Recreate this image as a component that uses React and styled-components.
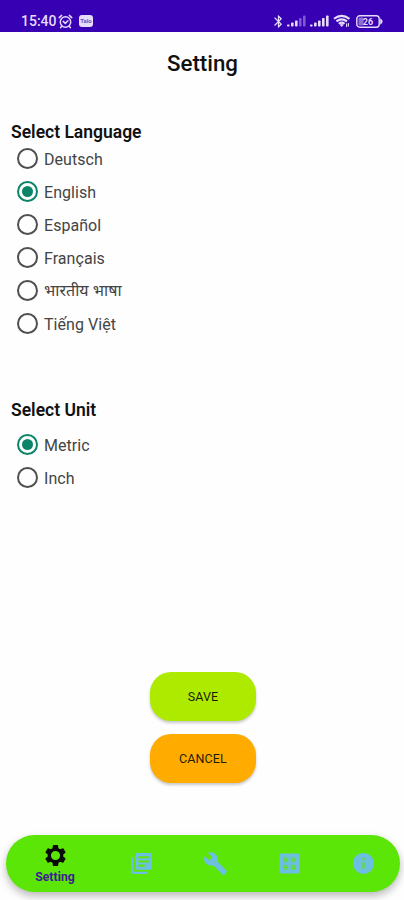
import React, { useState } from "react";
import styled, { createGlobalStyle } from "styled-components";
import { MdLibraryBooks, MdBuild, MdInfo, MdBluetooth } from "react-icons/md";

const GlobalStyle = createGlobalStyle`
    * {
        box-sizing: border-box;
    }
    body {
        margin: 0;
        background: #fff;
        font-family: Roboto, "Noto Sans", sans-serif;
    }
`;

const Screen = styled.div`
    display: flex;
    flex-direction: column;
    width: 404px;
    height: 900px;
    overflow: hidden;
    background: #fefefe;
`;

const StatusBar = styled.header`
    display: flex;
    align-items: flex-start;
    justify-content: space-between;
    height: 32px;
    padding: 13px 21px 0 21px;
    background: #3700b3;
    color: #e6dcfa;
`;

const StatusGroup = styled.div`
    display: flex;
    align-items: center;
    height: 16px;

    svg {
        display: block;
    }
`;

const Gap = styled.span`
    width: ${(props) => props.$size}px;
`;

const Clock = styled.span`
    width: 37px;
    font-size: 14px;
    font-weight: 500;
    line-height: 16px;
    white-space: nowrap;
`;

const AppBadge = styled.span`
    width: 14px;
    height: 12px;
    margin-left: 6px;
    border-radius: 3px;
    background: #e6dcfa;
    color: #6a4cc0;
    font-size: 6px;
    font-weight: 700;
    line-height: 12px;
    text-align: center;
`;

const Title = styled.h1`
    margin: 17px 0 0 1px;
    font-size: 22.3px;
    font-weight: 500;
    line-height: 28px;
    text-align: center;
    color: #111;
`;

const Section = styled.section`
    margin-top: ${(props) => props.$top}px;
    padding-left: 11px;
`;

const SectionTitle = styled.h2`
    margin: 0 0 ${(props) => props.$gap}px;
    font-size: 17.5px;
    font-weight: 600;
    line-height: 22px;
    color: #111;
`;

const Option = styled.label`
    display: flex;
    align-items: center;
    height: 33px;
    padding-left: 6px;
    font-size: 16px;
    color: #444;
    cursor: pointer;

    input {
        display: none;
    }
`;

const OptionText = styled.span`
    padding-top: 2px;
    letter-spacing: 0.05px;
    line-height: 20px;

    &:lang(hi) {
        padding-top: 0;
    }
`;

const Radio = styled.span`
    display: flex;
    align-items: center;
    justify-content: center;
    width: 21px;
    height: 21px;
    margin-right: 6px;
    border: 2px solid ${(props) => (props.$checked ? "#0b8468" : "#4f4f4f")};
    border-radius: 50%;

    &::after {
        content: "";
        width: 11px;
        height: 11px;
        border-radius: 50%;
        background: ${(props) => (props.$checked ? "#0b8468" : "transparent")};
    }
`;

const Actions = styled.div`
    display: flex;
    flex-direction: column;
    align-items: center;
    gap: 13px;
    margin-top: auto;
    padding-left: 2px;
`;

const Button = styled.button`
    width: 106px;
    height: 49px;
    padding: 0 0 1px;
    border: 0;
    border-radius: 21px;
    background: ${(props) => props.$color};
    box-shadow: 0 2px 3px rgba(0, 0, 0, 0.22);
    color: #1c1c08;
    font-family: inherit;
    font-size: 12.5px;
    font-weight: 400;
    letter-spacing: 0.1px;
`;

const TabBar = styled.nav`
    display: flex;
    height: 57px;
    margin: 52px 4px 8px 6px;
    border-radius: 29px;
    background: #5ce608;
    box-shadow: 0 4px 8px rgba(0, 0, 0, 0.28);
`;

const Tab = styled.a`
    display: flex;
    flex: ${(props) => (props.$active ? "0 0 98px" : "1")};
    flex-direction: column;
    align-items: center;
    justify-content: center;
    color: ${(props) => (props.$active ? "#0a0a0a" : "#6cbfe0")};
    font-size: 25px;

    svg {
        display: block;
    }
`;

const TabLabel = styled.span`
    margin-top: 2px;
    font-size: 12.3px;
    font-weight: 700;
    line-height: 15px;
    color: #3d1c94;
`;

const AlarmIcon = () => (
    <svg width="15" height="15" viewBox="0 0 15 15" fill="none" stroke="currentColor" strokeWidth="1.5" strokeLinecap="round">
        <circle cx="7.5" cy="8" r="5.2" />
        <path d="M1.2 3.6 3.6 1.4M13.8 3.6l-2.4-2.2M5.2 7.4l2.1 2 2.6-2.6M3.6 12.4l-1 1.2M11.4 12.4l1 1.2" />
    </svg>
);

const SignalIcon = ({ level }) => (
    <svg width="20" height="12" viewBox="0 0 20 12" fill="currentColor">
        {[2, 4, 6, 8.5, 11].map((h, i) => (
            <rect key={h} x={i * 4} y={11.5 - h} width="2.6" height={h} rx="0.8" opacity={i < level ? 1 : 0.4} />
        ))}
    </svg>
);

const WifiIcon = () => (
    <svg width="18" height="14" viewBox="0 0 18 14" fill="none" stroke="currentColor" strokeWidth="2.1">
        <path d="M1 4.8Q8.5-1.2 16.5 4.8M3.4 7.4q5.2-4.2 10.6 0M5.8 9.8q2.9-2.4 5.8 0" />
        <path d="m8.7 13-2-2.2q2-1.4 4 0z" fill="currentColor" stroke="none" />
        <path d="M13.6 9.5v3.5M15.4 9v3.6" strokeWidth="1.1" />
    </svg>
);

const BatteryIcon = () => (
    <svg width="27" height="13" viewBox="0 0 27 13">
        <rect x="0.8" y="0.8" width="22.4" height="11.4" rx="3" fill="none" stroke="currentColor" strokeWidth="1.4" />
        <rect x="2.5" y="2.5" width="5" height="8" rx="1" fill="currentColor" opacity="0.5" />
        <path d="M24.2 3.2q2.4 1.2 2.4 3.3t-2.4 3.3z" fill="currentColor" />
        <text x="12" y="9.7" fill="currentColor" fontSize="9" fontWeight="700" textAnchor="middle">26</text>
    </svg>
);

const GearIcon = () => (
    <svg width="25" height="25" viewBox="0 0 24 24" fill="currentColor" fillRule="evenodd">
        <path d="M19.4 13c.1-.3.1-.7.1-1s0-.7-.1-1l2.1-1.6c.2-.2.3-.4.1-.7l-2-3.4c-.1-.2-.4-.3-.6-.2l-2.5 1c-.5-.4-1.1-.7-1.7-1l-.4-2.6c0-.3-.2-.5-.4-.5h-4c-.2 0-.4.2-.5.5l-.4 2.6c-.6.3-1.1.6-1.6 1l-2.5-1c-.3-.1-.5 0-.6.2l-2 3.4c-.2.3-.1.5.1.7L4.6 11c0 .3-.1.7-.1 1s0 .7.1 1l-2.1 1.6c-.2.2-.3.4-.1.7l2 3.4c.1.2.4.3.6.2l2.5-1c.5.4 1.1.7 1.6 1l.4 2.6c.1.3.3.5.5.5h4c.2 0 .4-.2.5-.5l.4-2.6c.6-.3 1.1-.6 1.6-1l2.5 1c.3.1.5 0 .6-.2l2-3.4c.2-.3.1-.5-.1-.7zM12 7.6a4.4 4.4 0 1 0 0 8.8a4.4 4.4 0 1 0 0-8.8z" />
    </svg>
);

// calculator tile, one small operator in each quarter
const GridIcon = () => (
    <svg width="25" height="25" viewBox="0 0 24 24">
        <rect x="2.5" y="2.5" width="19" height="19" rx="1.5" fill="currentColor" />
        <g fill="#5ce608" opacity="0.45">
            <rect x="5.8" y="5.8" width="5" height="5" />
            <rect x="13.2" y="5.8" width="5" height="5" />
            <rect x="5.8" y="13.2" width="5" height="5" />
            <rect x="13.2" y="13.2" width="5" height="5" />
        </g>
        <path
            d="M8.3 6v4.6M6 8.3h4.6M13.4 8.3H18M6 15.7h4.600M13.400 14.600H18M13.400 17H18"
            fill="none"
            stroke="#5ce608"
            strokeWidth="1"
        />
    </svg>
);

const languages = [
    { label: "Deutsch", lang: "de" },
    { label: "English", lang: "en" },
    { label: "Español", lang: "es" },
    { label: "Français", lang: "fr" },
    { label: "भारतीय भाषा", lang: "hi" },
    { label: "Tiếng Việt", lang: "vi" },
];
const units = [{ label: "Metric" }, { label: "Inch" }];

const tabs = [
    { name: "Setting", Icon: GearIcon },
    { name: "Library", Icon: MdLibraryBooks },
    { name: "Tools", Icon: MdBuild },
    { name: "Calculator", Icon: GridIcon },
    { name: "Info", Icon: MdInfo },
];

const RadioList = (props) => {
    return props.options.map(({ label, lang }) => (
        <Option key={label}>
            <input
                type="radio"
                name={props.name}
                checked={props.value === label}
                onChange={() => props.onChange(label)}
            />
            <Radio $checked={props.value === label} />
            <OptionText lang={lang}>{label}</OptionText>
        </Option>
    ));
};

const App = () => {
    const [language, setLanguage] = useState("English");
    const [unit, setUnit] = useState("Metric");

    return (
        <Screen>
            <GlobalStyle />
            <StatusBar>
                <StatusGroup>
                    <Clock>15:40</Clock>
                    <AlarmIcon />
                    <AppBadge>Talo</AppBadge>
                </StatusGroup>
                <StatusGroup>
                    <MdBluetooth size={15} />
                    <Gap $size={1} />
                    <SignalIcon level={3} />
                    <Gap $size={3} />
                    <SignalIcon level={5} />
                    <Gap $size={3} />
                    <WifiIcon />
                    <Gap $size={5} />
                    <BatteryIcon />
                </StatusGroup>
            </StatusBar>

            <Title>Setting</Title>

            <Section $top={44}>
                <SectionTitle $gap={-1}>Select Language</SectionTitle>
                <RadioList name="language" options={languages} value={language} onChange={setLanguage} />
            </Section>

            <Section $top={59}>
                <SectionTitle $gap={7}>Select Unit</SectionTitle>
                <RadioList name="unit" options={units} value={unit} onChange={setUnit} />
            </Section>

            <Actions>
                <Button $color="#aeea00">SAVE</Button>
                <Button $color="#ffab00">CANCEL</Button>
            </Actions>

            <TabBar>
                {tabs.map(({ name, Icon }, index) => (
                    <Tab key={name} $active={index === 0}>
                        <Icon />
                        {index === 0 && <TabLabel>{name}</TabLabel>}
                    </Tab>
                ))}
            </TabBar>
        </Screen>
    );
};

export default App;
